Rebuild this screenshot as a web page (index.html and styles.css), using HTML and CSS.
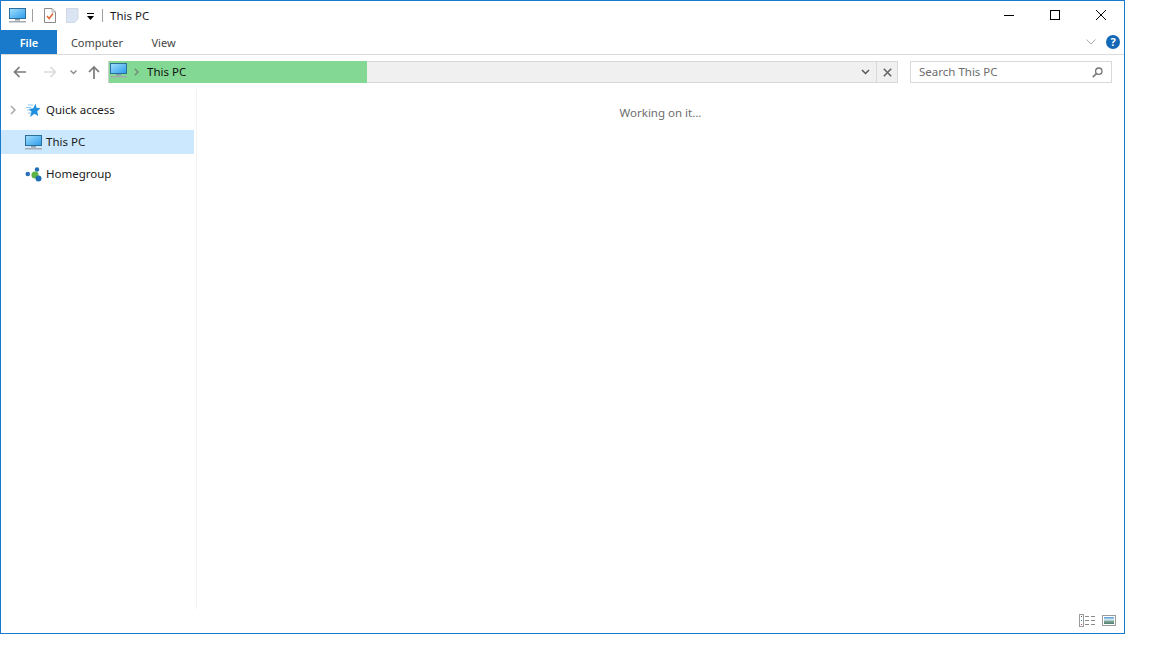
FILE: index.html
```html
<!DOCTYPE html>
<html lang="en">
<head>
<meta charset="utf-8">
<title>This PC</title>
<link rel="stylesheet" href="styles.css">
</head>
<body>
<svg class="defs" width="0" height="0" aria-hidden="true">
  <defs>
    <linearGradient id="scr" x1="0" y1="0" x2="1" y2="1"><stop offset="0" stop-color="#a3e0fd"/><stop offset="1" stop-color="#2a9bea"/></linearGradient>
    <linearGradient id="photo" x1="0" y1="0" x2="0" y2="1"><stop offset="0" stop-color="#4f97d6"/><stop offset=".4" stop-color="#dfeef4"/><stop offset=".6" stop-color="#7fa79a"/><stop offset="1" stop-color="#4f7f72"/></linearGradient>
    <symbol id="pc" viewBox="0 0 17 15">
      <rect x="0.500" y="0.500" width="16" height="10" fill="url(#scr)" stroke="#2d6f9c"/>
      <rect x="6" y="11" width="5" height="1.500" fill="#8a9aa5"/>
      <rect x="0" y="13" width="17" height="1.500" fill="#a4acb2"/>
    </symbol>
  </defs>
</svg>
<div class="window">
  <header class="titlebar">
    <svg class="ic-pc"><use href="#pc"/></svg>
    <span class="qsep"></span>
    <svg class="ic-props" viewBox="0 0 12 15" width="12" height="15"><path d="M.5.500h7.500l3.500 3.500v10.500H.5z" fill="#fff" stroke="#8a8a8a"/><path d="M8 .5v3.500h3.500" fill="none" stroke="#b0b0b0"/><path d="M3 8l2.200 2.500L9 5.500" fill="none" stroke="#e8642e" stroke-width="1.500"/></svg>
    <svg class="ic-new" viewBox="0 0 13 15" width="13" height="15"><path d="M.5.500h11.500v10.500l-3.500 3.500H.5z" fill="#dbe4f2" stroke="#ced8e8"/></svg>
    <svg class="ic-drop" viewBox="0 0 8 8" width="8" height="8"><path d="M0 .5h7" stroke="#000"/><path d="M0 3h7L3.500 7z" fill="#000"/></svg>
    <span class="qsep qsep-b"></span>
    <span class="wintitle">This PC</span>
    <div class="caption">
      <svg class="cap" viewBox="0 0 46 30"><path d="M18 15.500h10" stroke="#000"/></svg>
      <svg class="cap" viewBox="0 0 46 30"><rect x="18.500" y="10.500" width="9" height="9" fill="none" stroke="#000"/></svg>
      <svg class="cap" viewBox="0 0 46 30"><path d="M18 10l10 10M28 10L18 20" stroke="#000" fill="none"/></svg>
    </div>
  </header>
  <nav class="ribbon">
    <span class="tab tab-file">File</span>
    <span class="tab tab-computer">Computer</span>
    <span class="tab tab-view">View</span>
    <span class="ribbon-right">
      <svg class="ic-collapse" viewBox="0 0 10 6" width="10" height="6"><path d="M.5.500L5 5 9.500.500" fill="none" stroke="#a9a9a9"/></svg>
      <span class="help">?</span>
    </span>
  </nav>
  <div class="addressrow">
    <svg class="nav nav-back" viewBox="0 0 14 12" width="14" height="12"><path d="M13 6H2M6.500 1L1.500 6l5 5" fill="none" stroke="#7a7a7a" stroke-width="1.700"/></svg>
    <svg class="nav nav-fwd" viewBox="0 0 14 12" width="14" height="12"><path d="M1 6h11M7.500 1l5 5-5 5" fill="none" stroke="#dcdcdc" stroke-width="1.700"/></svg>
    <svg class="nav nav-recent" viewBox="0 0 7 5" width="7" height="5"><path d="M.5.500L3.500 3.500 6.500.500" fill="none" stroke="#8a8a8a" stroke-width="1.300"/></svg>
    <svg class="nav nav-up" viewBox="0 0 12 14" width="12" height="14"><path d="M6 14V2M1 7l5-5 5 5" fill="none" stroke="#7a7a7a" stroke-width="1.700"/></svg>
    <div class="address">
      <div class="progress">
        <svg class="ic-pc ic-pc-addr"><use href="#pc"/></svg>
        <svg class="crumb" viewBox="0 0 5 8" width="5" height="8"><path d="M.8.800L4 4 .8 7.200" fill="none" stroke="#6f8f78" stroke-width="1.500"/></svg>
        <span class="addr-text">This PC</span>
      </div>
      <span class="addr-fill"></span>
      <span class="addr-btn addr-drop"><svg viewBox="0 0 9 6" width="9" height="6"><path d="M1 1l3.500 3.500L8 1" fill="none" stroke="#555" stroke-width="1.500"/></svg></span>
      <span class="addr-btn addr-stop"><svg viewBox="0 0 9 9" width="9" height="9"><path d="M.8.800l7.400 7.400M8.200.800L.8 8.200" fill="none" stroke="#666" stroke-width="1.600"/></svg></span>
    </div>
    <div class="search">
      <span class="search-text">Search This PC</span>
      <svg viewBox="0 0 11 11" width="11" height="11"><circle cx="6.800" cy="4.200" r="3.200" fill="none" stroke="#777" stroke-width="1.300"/><path d="M4.500 6.500L.8 10.200" stroke="#777" stroke-width="1.700"/></svg>
    </div>
  </div>
  <div class="main">
    <aside class="sidebar">
      <div class="tree-row">
        <svg class="chev" viewBox="0 0 6 10" width="6" height="10"><path d="M1 1l4 4-4 4" fill="none" stroke="#a6a6a6" stroke-width="1.500"/></svg>
        <svg class="tree-ic" viewBox="0 0 16 15" width="16" height="15"><path d="M10.500.5l1 4.300 4 .4-3.300 3 1 4.800-3.700-2.300L5 14l1.500-5.200L3.800 6l4.500-.8z" fill="#1f8fe0"/><path d="M3 2h5M1 4.500h5M2 7h3M3 10h3" stroke="#8cc6ef"/></svg>
        <span>Quick access</span>
      </div>
      <div class="tree-row tree-selected">
        <svg class="ic-pc ic-pc-tree"><use href="#pc"/></svg>
        <span>This PC</span>
      </div>
      <div class="tree-row">
        <svg class="tree-ic tree-ic-hg" viewBox="0 0 17 15" width="17" height="15"><circle cx="2.800" cy="7" r="2.300" fill="#2a6fb8"/><circle cx="12" cy="2.500" r="2.200" fill="#1f6fb5"/><circle cx="10" cy="8" r="3.600" fill="#5cb346"/><circle cx="13.500" cy="11.500" r="3" fill="#1f6fb5"/></svg>
        <span>Homegroup</span>
      </div>
    </aside>
    <main class="content">
      <p class="status">Working on it...</p>
      <div class="viewmodes">
        <svg viewBox="0 0 17 13" width="17" height="13"><rect x=".5" y=".5" width="4" height="12" fill="#fff" stroke="#9a9a9a"/><path d="M2 2.500h1" stroke="#555"/><path d="M2 6.500h1" stroke="#3a7fc0"/><path d="M2 10.500h1" stroke="#c04040"/><path d="M6 2.500h4M12 2.500h4M6 6.500h4M12 6.500h4M6 10.500h4M12 10.500h4" stroke="#8a8a8a"/></svg>
        <svg viewBox="0 0 14 11" width="14" height="11"><rect x=".5" y=".5" width="13" height="10" fill="#fff" stroke="#9a9a9a"/><rect x="2" y="2" width="10" height="7" fill="url(#photo)"/></svg>
      </div>
    </main>
  </div>
</div>
</body>
</html>
```
FILE: styles.css
```css
* { box-sizing: border-box; }
html, body { margin: 0; padding: 0; background: #fff; }
body { width: 1152px; height: 648px; overflow: hidden; font-family: "Noto Sans", "Open Sans", sans-serif; font-size: 11.5px; color: #1a1a1a; }
.defs { display: block; height: 0; }
svg { display: block; flex: none; }

.window { width: 1125px; height: 634px; border: 1px solid #1979ca; display: flex; flex-direction: column; }

.titlebar { height: 29px; display: flex; align-items: center; flex: none; }
.ic-pc { width: 17px; height: 15px; }
.titlebar > .ic-pc { margin-left: 8px; }
.qsep { width: 1px; height: 13px; background: #a0a0a0; margin-left: 6px; }
.ic-props { margin-left: 11px; }
.ic-new { margin-left: 10px; }
.ic-drop { margin-left: 8px; margin-top: 3px; }
.qsep-b { margin-left: 7px; }
.wintitle { margin-left: 7px; color: #1a1a1a; }
.caption { margin-left: auto; display: flex; }
.cap { width: 46px; height: 30px; margin-top: -1px; }

.ribbon { height: 25px; flex: none; display: flex; align-items: stretch; border-bottom: 1px solid #dadbdc; }
.tab { display: flex; align-items: center; justify-content: center; color: #444; font-size: 11px; }
.tab-file { width: 56px; background: #1979ca; color: #fff; font-weight: 600; }
.tab-computer { width: 80px; }
.tab-view { width: 55px; margin-left: -1px; }
.ribbon-right { margin-left: auto; display: flex; align-items: center; padding-right: 4px; }
.ic-collapse { margin-right: 10px; margin-left: -4px; }
.help { width: 14px; height: 14px; border-radius: 50%; background: #1468b8; color: #fff; font: bold 11px/14px "Noto Sans", sans-serif; text-align: center; }

.addressrow { height: 34px; flex: none; display: flex; align-items: center; }
.nav-back { margin-left: 12px; }
.nav-fwd { margin-left: 16px; }
.nav-recent { margin-left: 13px; }
.nav-up { margin-left: 11px; }
.address { width: 790px; height: 22px; margin-left: 8px; display: flex; align-items: stretch; background: #f0f0f0; border: 1px solid #d9d9d9; }
.progress { width: 259px; background: #83d893; display: flex; align-items: center; margin: -1px 0 -1px -1px; border-left: 1px solid #c8d0ca; }
.ic-pc-addr { margin-left: 1px; margin-top: -3px; }
.crumb { margin-left: 7px; }
.addr-text { margin-left: 8px; color: #111; transform: translateY(-1px); }
.addr-fill { flex: 1; }
.addr-btn { width: 21px; display: flex; align-items: center; justify-content: center; }
.addr-stop { border-left: 1px solid #d9d9d9; }
.search { width: 202px; height: 22px; margin-left: 12px; padding: 0 8px; border: 1px solid #d9d9d9; display: flex; align-items: center; justify-content: space-between; color: #6d6d6d; }
.search-text { transform: translateY(-1px); }

.main { flex: 1; display: flex; min-height: 0; }
.sidebar { width: 196px; height: 520px; flex: none; padding-top: 9px; border-right: 1px solid #f2f2f2; display: flex; flex-direction: column; gap: 8px; }
.tree-row { width: 193px; height: 24px; display: flex; align-items: center; padding-left: 24px; position: relative; color: #1a1a1a; }
.tree-row span { position: absolute; left: 45px; transform: translateY(-1px); }
.tree-selected { background: #cce8ff; }
.chev { position: absolute; left: 9px; top: 7px; }

.content { flex: 1; display: flex; flex-direction: column; }
.status { margin: 16px 0 0; text-align: center; color: #6d6d6d; }
.viewmodes { margin-top: auto; display: flex; align-items: center; justify-content: flex-end; gap: 6px; padding: 0 8px 6px 0; }
```
